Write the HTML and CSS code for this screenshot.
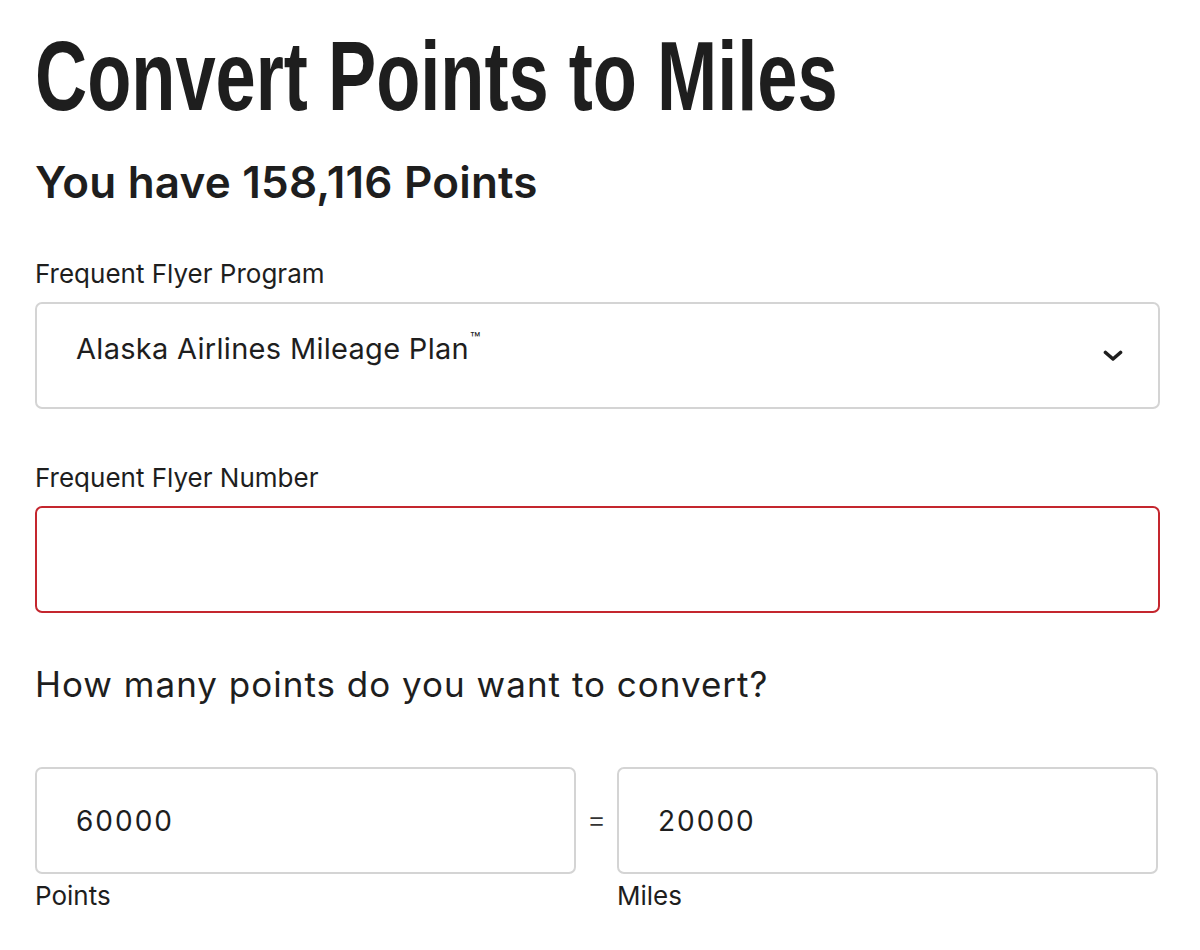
FILE: index.html
```html
<!DOCTYPE html>
<html lang="en">
<head>
<meta charset="utf-8">
<title>Convert Points to Miles</title>
<link rel="stylesheet" href="styles.css">
</head>
<body>
<main class="page">
  <h1 class="title"><span class="title-text">Convert Points to Miles</span></h1>
  <h2 class="balance">You have 158,116 Points</h2>

  <div class="field field-program">
    <label class="label">Frequent Flyer Program</label>
    <div class="select">
      <span class="select-value">Alaska Airlines Mileage Plan<sup class="tm">™</sup></span>
      <svg class="chevron" width="20" height="12" viewBox="0 0 20 12" aria-hidden="true">
        <path d="M2.5 2.5 L10 9 L17.5 2.5" fill="none" stroke="#1e1e1e" stroke-width="3.6" stroke-linecap="round" stroke-linejoin="round"/>
      </svg>
    </div>
  </div>

  <div class="field field-number">
    <label class="label">Frequent Flyer Number</label>
    <div class="input input-error"></div>
  </div>

  <h3 class="question">How many points do you want to convert?</h3>

  <div class="convert">
    <div class="convert-col">
      <div class="input input-value">60000</div>
      <div class="sublabel">Points</div>
    </div>
    <div class="equals">=</div>
    <div class="convert-col">
      <div class="input input-value">20000</div>
      <div class="sublabel">Miles</div>
    </div>
  </div>
</main>
</body>
</html>
```

FILE: styles.css
```css
* { box-sizing: border-box; }

html, body {
  margin: 0;
  padding: 0;
  background: #ffffff;
}

body {
  font-family: "Inter", "Lato", "Liberation Sans", sans-serif;
  color: #1e1e1e;
}

.page {
  width: 1160px;
  padding-left: 35px;
  display: flex;
  flex-direction: column;
}

.title {
  margin: 27px 0 0 0;
  font-family: "Liberation Sans", Arial, sans-serif;
  font-weight: 700;
  font-size: 98px;
  line-height: 98px;
  height: 98px;
  white-space: nowrap;
  letter-spacing: 0;
}

.title-text {
  display: inline-block;
  transform: scaleX(0.737);
  transform-origin: left center;
}

.balance {
  margin: 31px 0 0 0;
  font-size: 44px;
  font-weight: 600;
  line-height: 52px;
  letter-spacing: 0.2px;
}

.label {
  display: block;
  font-size: 26px;
  line-height: 32px;
  font-weight: 400;
}

.field-program { margin-top: 50px; }
.field-number { margin-top: 53px; }

.select,
.input {
  height: 107px;
  border: 2px solid #d4d4d4;
  border-radius: 7px;
  background: #fff;
}

.select {
  margin-top: 12px;
  display: flex;
  align-items: flex-start;
  justify-content: space-between;
  padding: 28px 35px 0 39px;
}

.select-value {
  font-size: 29px;
  line-height: 34px;
  letter-spacing: 0.3px;
}

.tm {
  font-size: 17px;
  line-height: 17px;
  vertical-align: top;
  position: relative;
  top: -1px;
  margin-left: 1px;
  letter-spacing: -1px;
}

.chevron { align-self: center; margin-top: -28px; }

.input-error {
  margin-top: 12px;
  border-color: #c4262e;
}

.question {
  margin: 50px 0 0 0;
  font-size: 35px;
  font-weight: 400;
  line-height: 42px;
  letter-spacing: 1px;
}

.convert {
  margin-top: 62px;
  display: flex;
  align-items: flex-start;
}

.convert-col {
  width: 541px;
  display: flex;
  flex-direction: column;
}

.input-value {
  padding: 36px 0 0 39px;
  font-size: 28px;
  line-height: 32px;
  letter-spacing: 2px;
}

.equals {
  width: 41px;
  text-align: center;
  font-size: 30px;
  font-weight: 300;
  line-height: 32px;
  margin-top: 36px;
  color: #333;
}

.sublabel {
  font-size: 26px;
  line-height: 32px;
  margin-top: 6px;
}
```
